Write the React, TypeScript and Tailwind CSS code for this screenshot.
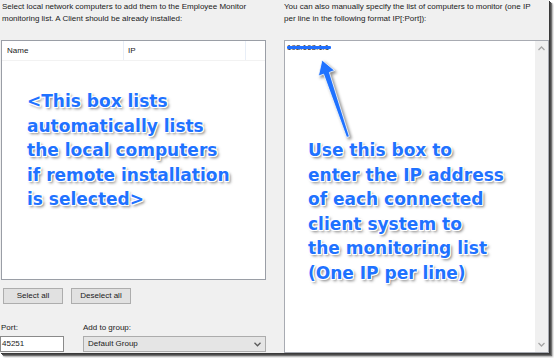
export default function App() {
  const annot =
    "font-['DejaVu_Sans',Verdana,sans-serif] font-bold text-[17px] leading-[24.5px] text-[#1f72ff] whitespace-nowrap [text-shadow:1px_1px_0_#fff,-1px_-1px_0_#fff,1px_-1px_0_#fff,-1px_1px_0_#fff,0_1px_0_#fff,1px_0_0_#fff,2px_2px_3px_rgba(0,0,0,0.55)]";
  return (
    <div className="w-[554px] h-[358px] bg-white overflow-hidden">
      <div className="w-[549px] h-[353px] bg-[#f0f0f0] shadow-[1px_1px_0_#3a3a3a,2px_2px_0_#4a4a4a,3px_3px_1px_#707070,4px_4px_2px_#b8b8b8] flex font-['Liberation_Sans',Arial,sans-serif] text-[8px] text-[#1a1a1a]">
        {/* Left column */}
        <div className="w-[266px] flex flex-col">
          <p className="pl-[2px] pt-[1px] leading-[12px] h-[40px]">
            Select local network computers to add them to the Employee Monitor
            <br />
            monitoring list. A Client should be already installed:
          </p>
          <div className="ml-[1px] w-[265px] h-[240px] border border-[#9a9ea6] bg-white flex flex-col">
            <div className="h-[20px] flex items-center border-b border-[#f2f2f2]">
              <div className="w-[122px] h-full flex items-center pl-[5px] border-r border-[#e8eef7]">Name</div>
              <div className="w-[122px] h-full flex items-center pl-[4px] border-r border-[#e8eef7]">IP</div>
            </div>
            <div className={"pt-[28px] pl-[25px] " + annot}>
              &lt;This box lists
              <br />
              automatically lists
              <br />
              the local computers
              <br />
              if remote installation
              <br />
              is selected&gt;
            </div>
          </div>
          <div className="mt-[8px] ml-[3px] flex gap-[8px]">
            <button className="w-[60px] h-[16px] bg-[#e1e1e1] border border-[#adadad] text-[8px] leading-none">Select all</button>
            <button className="w-[60px] h-[16px] bg-[#e1e1e1] border border-[#adadad] text-[8px] leading-none">Deselect all</button>
          </div>
          <div className="mt-[18px] flex leading-[12px]">
            <div className="w-[83px] pl-[1px]">Port:</div>
            <div>Add to group:</div>
          </div>
          <div className="mt-[2px] flex">
            <div className="w-[64px] h-[16px] bg-white border border-[#8a8a8a] flex items-center pl-[1px]">45251</div>
            <div className="ml-[19px] w-[183px] h-[16px] bg-[#e5e5e5] border border-[#acacac] flex items-center justify-between pl-[4px] pr-[4px]">
              <span>Default Group</span>
              <svg width="7" height="5" viewBox="0 0 7 5">
                <polyline points="0.5,0.8 3.5,3.8 6.5,0.8" fill="none" stroke="#5a5a5a" strokeWidth="1.3" />
              </svg>
            </div>
          </div>
        </div>

        {/* Right column */}
        <div className="ml-[18px] w-[265px] flex flex-col">
          <p className="pt-[1px] leading-[12px] h-[40px]">
            You can also manually specify the list of computers to monitor (one IP
            <br />
            per line in the following format IP[:Port]):
          </p>
          <div className="relative h-[313px] border border-[#a8abb2] bg-white flex">
            <div className="flex-1 flex flex-col">
              <div className="pl-[2px] pt-[1px] leading-[12px] h-[13px]">
                <span className="relative inline-block">
                  192.168.1.1
                  <span className="absolute left-0 right-[-2px] top-[3.5px] h-[3px] bg-[#1f6fff] rounded-[1px]" />
                </span>
              </div>
              <div className={"mt-[84px] pl-[23px] " + annot}>
                Use this box to
                <br />
                enter the IP address
                <br />
                of each connected
                <br />
                client system to
                <br />
                the monitoring list
                <br />
                (One IP per line)
              </div>
            </div>
            <div className="w-[13px] h-full bg-[#f0f0f0] flex flex-col items-center justify-between py-[5px]">
              <svg width="7" height="5" viewBox="0 0 7 5">
                <polyline points="0.5,4 3.5,1 6.5,4" fill="none" stroke="#a6a6a6" strokeWidth="1.3" />
              </svg>
              <svg width="7" height="5" viewBox="0 0 7 5">
                <polyline points="0.5,1 3.5,4 6.5,1" fill="none" stroke="#a6a6a6" strokeWidth="1.3" />
              </svg>
            </div>
            <svg
              className="absolute left-0 top-0 drop-shadow-[2px_2px_1.5px_rgba(0,0,0,0.45)]"
              width="80"
              height="110"
              viewBox="0 0 80 110"
            >
              <polygon
                points="37,19 49.6,29.5 44.4,31.4 64.4,95.6 61.6,96.4 38.6,33.2 33.4,35.1"
                fill="#1f72ff"
                stroke="#fff"
                strokeWidth="0.8"
                strokeLinejoin="round"
              />
            </svg>
          </div>
        </div>
      </div>
    </div>
  );
}
